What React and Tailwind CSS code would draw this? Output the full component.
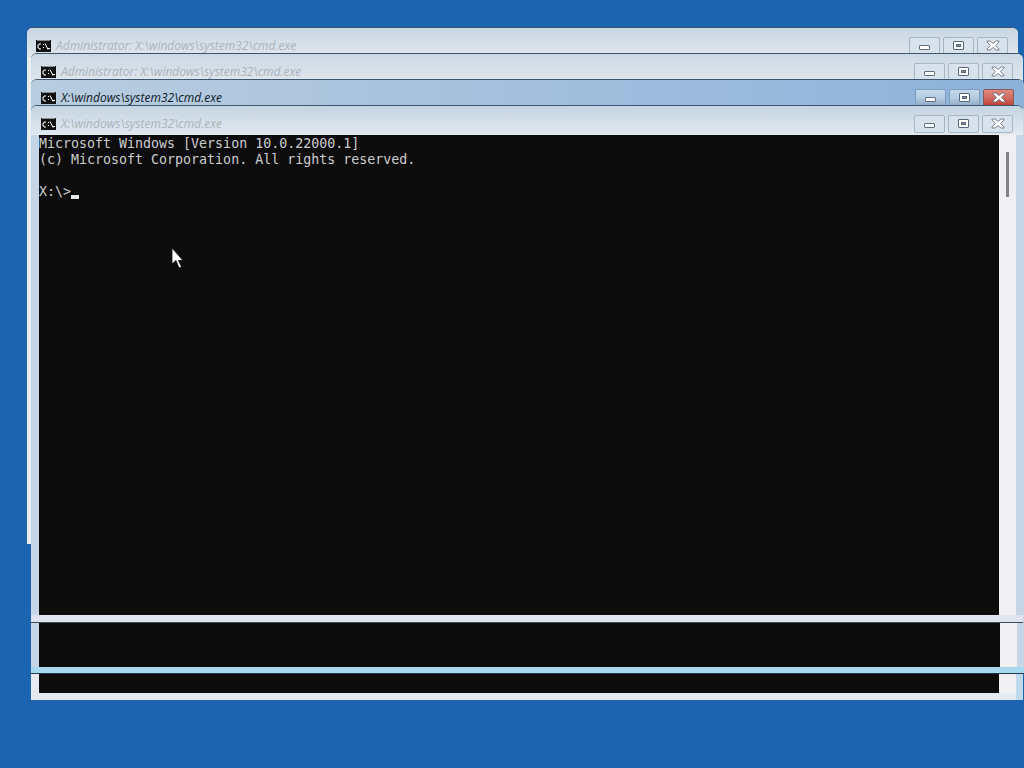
import React from "react";

const CmdIcon = () => (
  <svg width="15" height="12" viewBox="0 0 15 12" className="shrink-0">
    <rect width="15" height="12" fill="#111" />
    <rect x="1" y="0" width="13" height="1" fill="#8a8f96" />
    <path d="M5 4H3v1H2v3h1v1h2M7 4.5h1M7 7.5h1M9 3.5l3 6" fill="none" stroke="#fff" strokeWidth="1" />
    <rect x="12" y="8" width="2" height="1" fill="#fff" />
  </svg>
);

const CaptionButton = ({ active, close, children }) => (
  <div
    className={`w-[31px] h-[18px] flex items-center justify-center rounded-[2px] border ${
      close && active
        ? "border-[#8d5a5a] bg-gradient-to-b from-[#e08a80] via-[#d06a60] to-[#c2382c]"
        : active
          ? "border-[#7f9dbd] bg-gradient-to-b from-[#c3d8ec] via-[#b4cce2] to-[#8fa9c4]"
          : "border-[#a7b6c6] bg-[#d8e2ec]"
    }`}
  >
    {children}
  </div>
);

const Minimize = () => (
  <div className="w-[11px] h-[5px] mt-[3px] rounded-[1px] bg-white border border-[#5f6f80]" />
);

const Maximize = () => (
  <div className="w-[11px] h-[9px] flex items-center justify-center bg-white border border-[#56677a] rounded-[1px]">
    <div className="w-[5px] h-[3px] bg-[#7f8d9c] border border-[#56677a]" />
  </div>
);

const Close = () => (
  <svg width="14" height="11" viewBox="0 0 14 11">
    <path
      d="M1 1h3l3 2.5L10 1h3v1L9.5 5.5 13 9v1h-3L7 7.5 4 10H1V9l3.5-3.5L1 2z"
      fill="#fff"
      stroke="#5a6a7a"
      strokeWidth="0.8"
    />
  </svg>
);

const Window = ({ className, bar, title, titleClass, active, children }) => (
  <div className={`absolute flex flex-col rounded-t-[6px] border-t border-[#3d566e] ${className}`}>
    <div className={`h-[29px] shrink-0 flex items-center rounded-t-[6px] pt-[6px] pr-[10px] ${bar}`}>
      <CmdIcon />
      <span
        className={`ml-[5px] flex-1 italic text-[12px] ${titleClass}`}
        style={{ fontFamily: '"Open Sans", sans-serif' }}
      >
        {title}
      </span>
      <div className="flex gap-[3px]">
        <CaptionButton active={active}>
          <Minimize />
        </CaptionButton>
        <CaptionButton active={active}>
          <Maximize />
        </CaptionButton>
        <CaptionButton active={active} close>
          <Close />
        </CaptionButton>
      </div>
    </div>
    {children}
  </div>
);

const Client = ({ children, thumb, className = "mr-[7px]" }) => (
  <div className={`flex-1 flex min-h-0 ml-[8px] ${className}`}>
    <div className="flex-1 bg-[#0c0c0c] overflow-hidden">{children}</div>
    <div className="w-[17px] bg-[#f0f0f2] flex justify-center pt-[17px]">
      {thumb && <div className="w-[3px] h-[45px] bg-[#808488]" />}
    </div>
  </div>
);

export default function App() {
  return (
    <div className="relative w-[1024px] h-[768px] overflow-hidden bg-[#1c63b0]">
      <Window
        className="left-[27px] top-[27px] w-[991px] h-[517px] bg-[#e8eef4]"
        bar="pl-[9px] bg-gradient-to-b from-[#c9d7e3] to-[#e0e7ee]"
        title="Administrator: X:\windows\system32\cmd.exe"
        titleClass="text-[#a9b3bc]"
      >
        <Client />
      </Window>

      <Window
        className="left-[31px] top-[53px] w-[992px] h-[647px] bg-[#e6ebf2]"
        bar="pl-[10px] bg-gradient-to-b from-[#cbd8e4] to-[#e0e7ee]"
        title="Administrator: X:\windows\system32\cmd.exe"
        titleClass="text-[#a9b3bc]"
      >
        <div className="flex-1 pb-[7px] flex flex-col border-r-[7px] border-r-[#c0d8ec]">
          <Client className="mr-0" />
        </div>
      </Window>

      <Window
        className="left-[31px] top-[79px] w-[993px] h-[595px] bg-[#c6d6e6] border-b border-b-[#23384d]"
        bar="pl-[10px] bg-gradient-to-r from-[#b9cde0] to-[#8db2d9]"
        title="X:\windows\system32\cmd.exe"
        titleClass="text-[#10181f]"
        active
      >
        <div className="flex-1 flex flex-col min-h-0">
          <Client />
          <div className="h-[6px] shrink-0 bg-[#a8d8ee]" />
        </div>
      </Window>

      <Window
        className="left-[31px] top-[105px] w-[992px] h-[518px] bg-[#c6d6e6]"
        bar="pl-[10px] bg-gradient-to-b from-[#c5d4e2] to-[#e2e9f0]"
        title="X:\windows\system32\cmd.exe"
        titleClass="text-[#a9b3bc]"
      >
        <div className="flex-1 flex flex-col min-h-0">
          <Client thumb>
            <pre
              className="pt-px text-[#cccccc] text-[13.3px] leading-[16px]"
              style={{ fontFamily: '"DejaVu Sans Mono", monospace' }}
            >
              {"Microsoft Windows [Version 10.0.22000.1]\n(c) Microsoft Corporation. All rights reserved.\n\nX:\\>"}
              <span className="inline-block w-[8px] h-[4px] bg-[#e8e8e8] align-baseline translate-y-[3px]" />
            </pre>
          </Client>
          <div className="h-[8px] shrink-0 bg-[#e0e4f0] border-b border-b-[#3f4a55]" />
        </div>
      </Window>

      <svg width="13" height="21" viewBox="0 0 13 21" className="absolute left-[171px] top-[248px]">
        <path d="M1 0v16l4-3.5L8 20l2.5-1-3-6.5H12z" fill="#fff" stroke="#111" strokeWidth="0.8" />
      </svg>
    </div>
  );
}
